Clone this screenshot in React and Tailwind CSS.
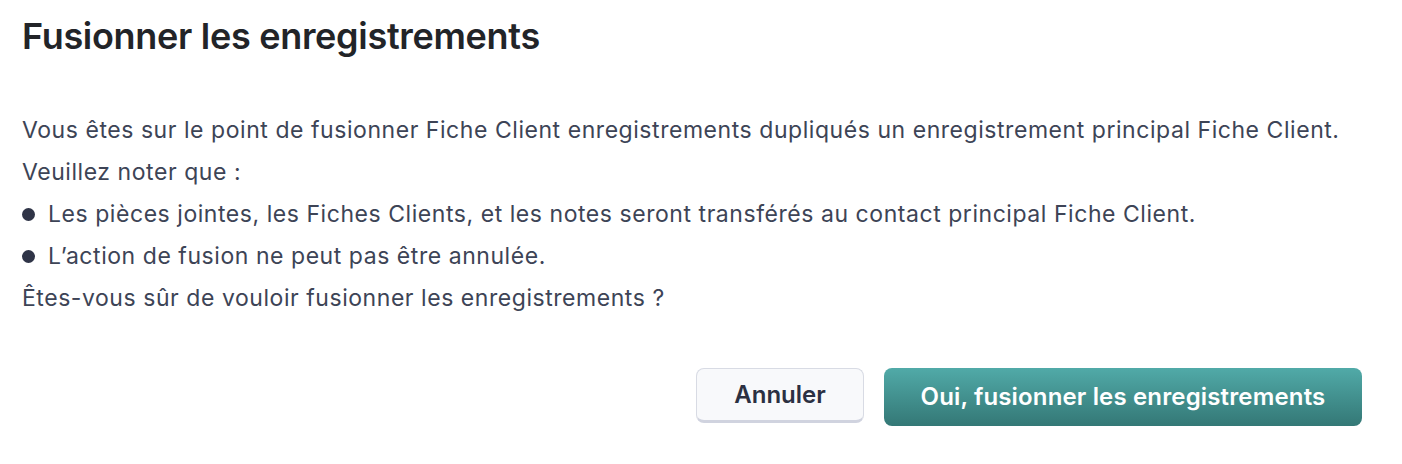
export default function App() {
  return (
    <div className="w-[1402px] h-[464px] bg-white" style={{ fontFamily: "Inter, 'Noto Sans', sans-serif" }}>
      <div className="pl-[22px] pr-[20px] pt-[14px]">
        <h1 className="text-[36px] leading-[44px] font-semibold text-[#222428] tracking-[-0.3px]">Fusionner les enregistrements</h1>
        <div className="mt-[51px] text-[23px] leading-[42px] text-[#3d4456] tracking-[0.55px]">
          <p>Vous êtes sur le point de fusionner Fiche Client enregistrements dupliqués un enregistrement principal Fiche Client.</p>
          <p>Veuillez noter que :</p>
          <div className="flex items-center gap-[13px]">
            <span className="w-[13px] h-[13px] rounded-full bg-[#2f3447] shrink-0" />
            <span>Les pièces jointes, les Fiches Clients, et les notes seront transférés au contact principal Fiche Client.</span>
          </div>
          <div className="flex items-center gap-[13px]">
            <span className="w-[13px] h-[13px] rounded-full bg-[#2f3447] shrink-0" />
            <span>L’action de fusion ne peut pas être annulée.</span>
          </div>
          <p>Êtes-vous sûr de vouloir fusionner les enregistrements ?</p>
        </div>
      </div>
      <div className="flex justify-end gap-[20px] pr-[40px] mt-[49px]">
        <button className="w-[168px] h-[55px] rounded-[8px] border border-[#d8dbe4] border-b-[3px] border-b-[#d0d3df] bg-[#f8f9fb] text-[24px] font-semibold text-[#2b3042]">Annuler</button>
        <button className="w-[478px] h-[58px] rounded-[8px] bg-gradient-to-b from-[#51aaa8] to-[#347876] text-[24px] font-semibold text-white tracking-[0.15px]">Oui, fusionner les enregistrements</button>
      </div>
    </div>
  );
}
